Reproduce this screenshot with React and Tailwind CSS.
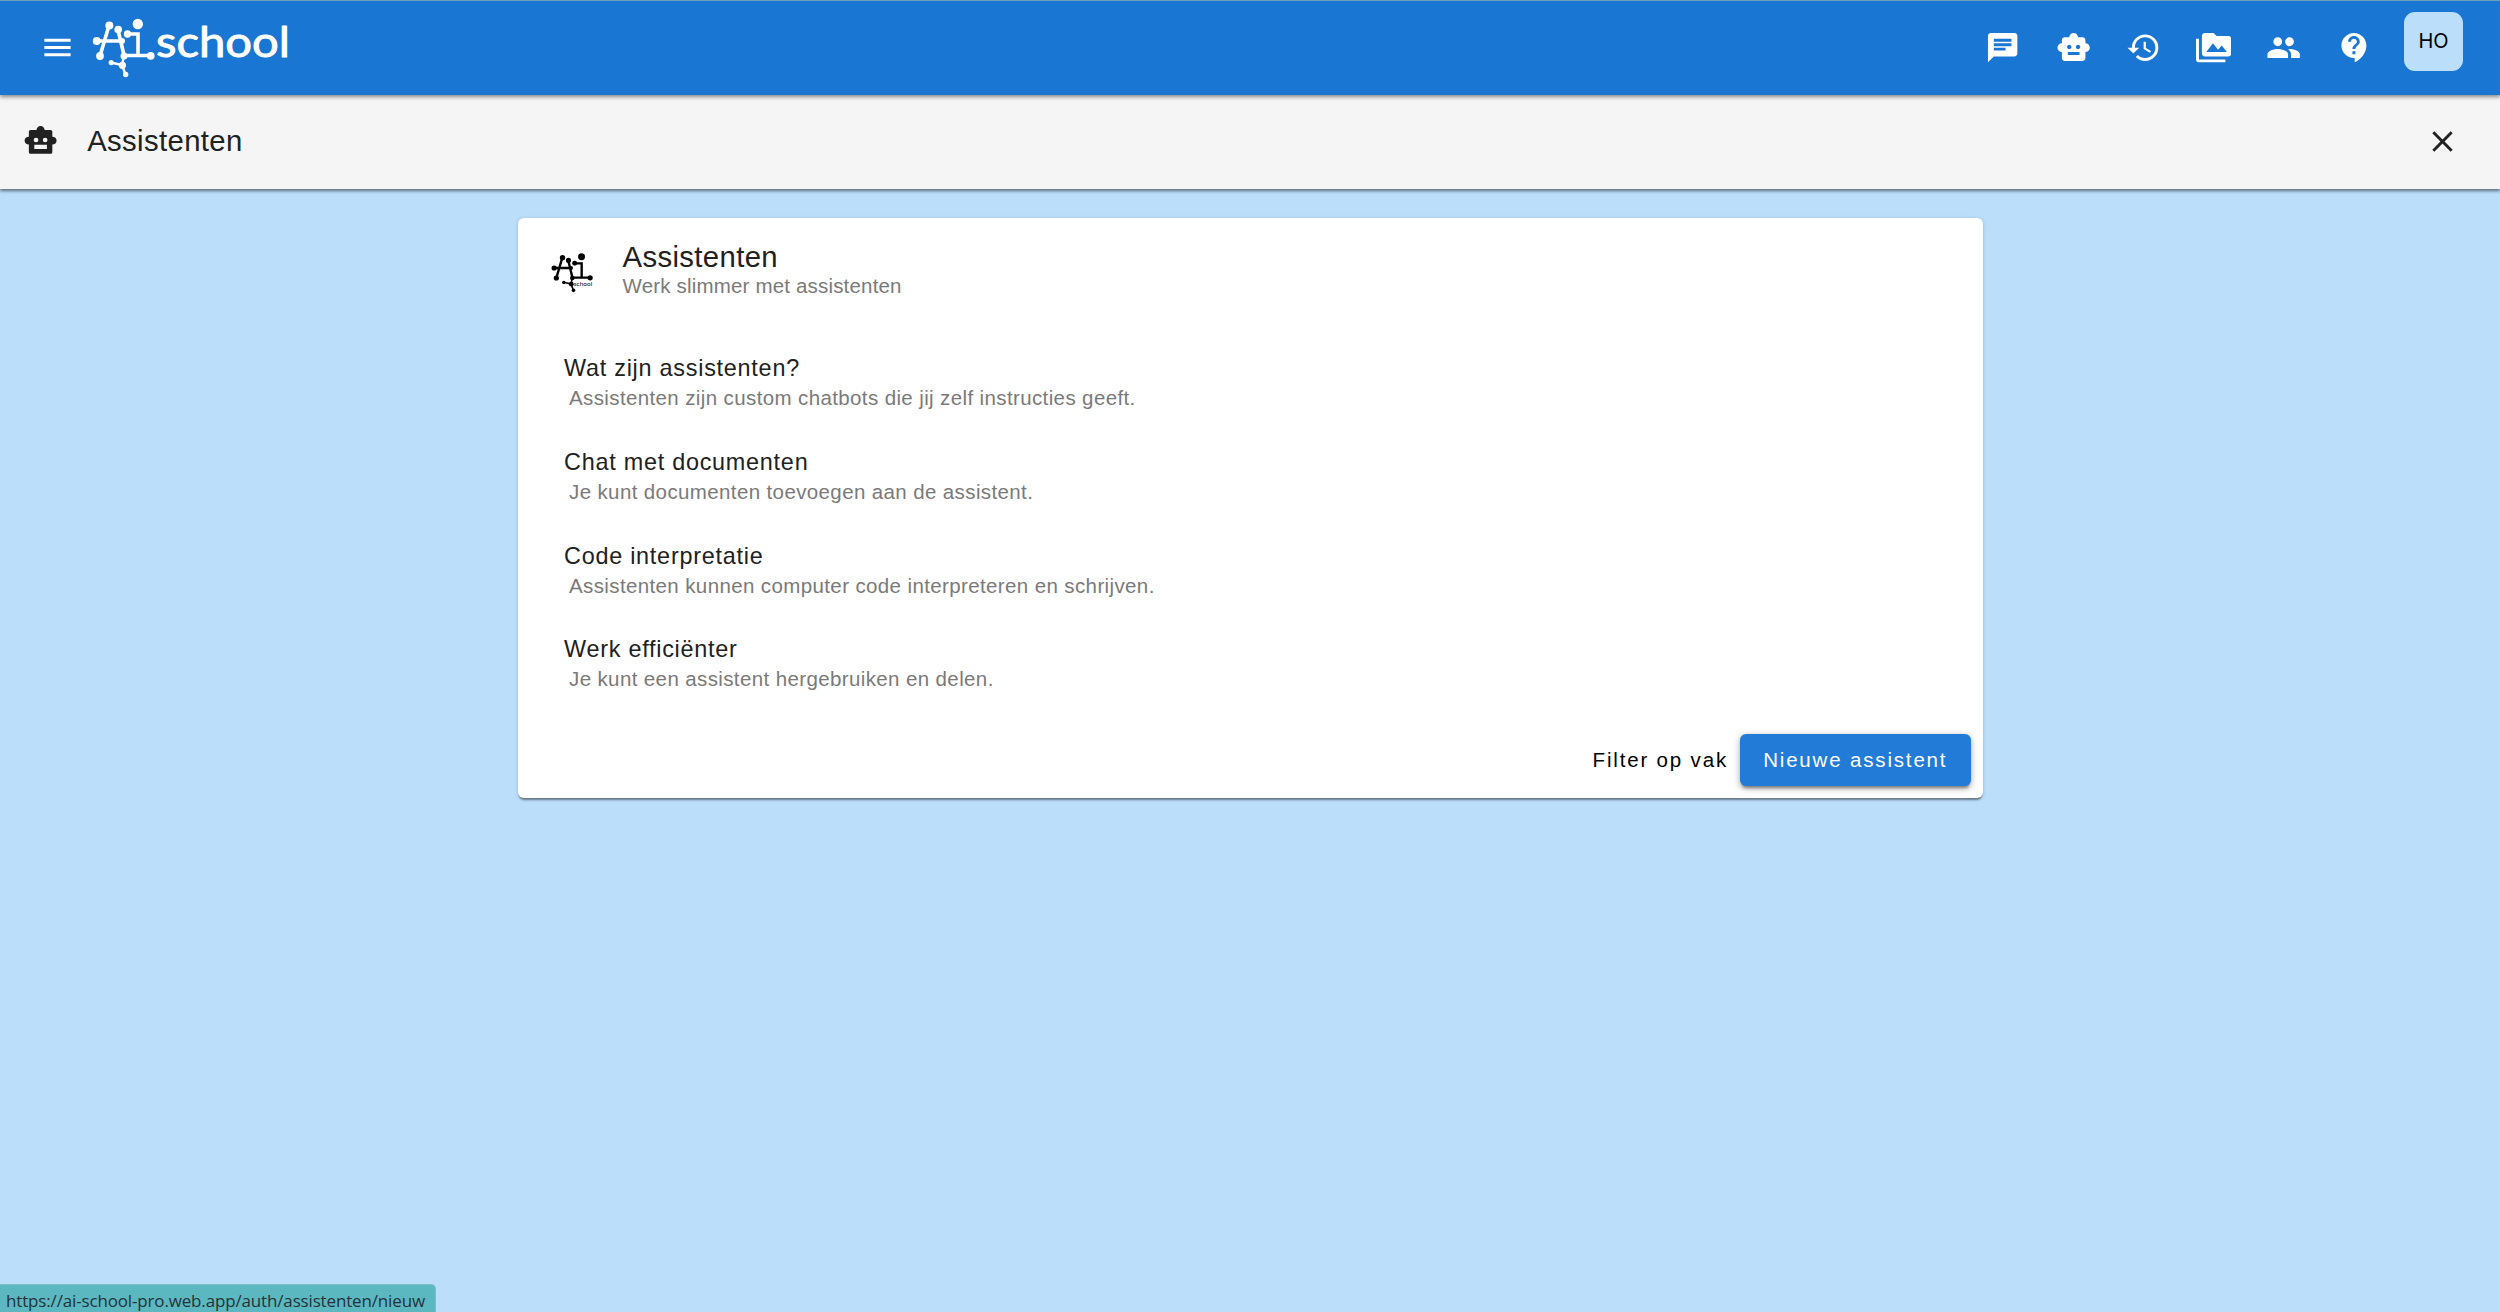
import { MdMenu, MdChat, MdSmartToy, MdHistory, MdPermMedia, MdPeople, MdContactSupport, MdClose } from "react-icons/md";

function AiMark({ className, children, viewBox }) {
  return (
    <svg className={className} viewBox={viewBox} fill="currentColor" stroke="currentColor">
      <g fill="none" strokeWidth="3.6" strokeLinecap="round">
        <path d="M109 25.5L100 56M97 41H121" />
        <path d="M118 30L124 55" />
        <path d="M127 34H138V55.5M124 55.5H151" />
        <path d="M124 55.5L122 65M111 62.5L122 65L125.500 74.500" strokeWidth="2.4" />
      </g>
      <g stroke="none">
        <circle cx="109.300" cy="25.500" r="4" />
        <circle cx="118.200" cy="29.600" r="3.800" />
        <circle cx="96.700" cy="41" r="3.900" />
        <circle cx="122" cy="41" r="3" />
        <circle cx="100" cy="56" r="3.900" />
        <circle cx="127.500" cy="34" r="3.700" />
        <circle cx="137.800" cy="24" r="5.200" />
        <circle cx="124" cy="56" r="3.500" />
        <circle cx="150.700" cy="55.800" r="3.900" />
        <circle cx="111.200" cy="62.600" r="2.600" />
        <circle cx="122.400" cy="65.300" r="3.600" />
        <circle cx="125.700" cy="74.500" r="2.700" />
      </g>
      {children}
    </svg>
  );
}

const actions = [MdChat, MdSmartToy, MdHistory, MdPermMedia, MdPeople, MdContactSupport];

const items = [
  ["Wat zijn assistenten?", "Assistenten zijn custom chatbots die jij zelf instructies geeft."],
  ["Chat met documenten", "Je kunt documenten toevoegen aan de assistent."],
  ["Code interpretatie", "Assistenten kunnen computer code interpreteren en schrijven."],
  ["Werk efficiënter", "Je kunt een assistent hergebruiken en delen."],
];

export default function App() {
  return (
    <div className="flex h-[1312px] w-[2500px] flex-col overflow-hidden bg-[#bbdefb] font-['Liberation_Sans',sans-serif] text-[#212121]">
      <header className="z-20 flex h-[95px] shrink-0 items-center border-t border-[#6f9fb8] bg-[#1976d2] pr-[37px] pb-px pl-[40px] text-white shadow-[0_2px_4px_rgba(0,0,0,0.45)]">
        <MdMenu className="size-[35px]" />
        <AiMark className="ml-[10px] h-[94px] w-[215px]" viewBox="85 1 215 94">
          <text x="156" y="56.500" fontSize="42" strokeWidth="0.900" strokeLinejoin="round" textLength="134" lengthAdjust="spacingAndGlyphs" fontFamily="Lato, sans-serif">school</text>
        </AiMark>
        <nav className="ml-auto flex gap-[35px]">
          {actions.map((Icon, i) => (
            <Icon key={i} className="size-[35.300px]" />
          ))}
        </nav>
        <div className="mb-[13px] ml-[32px] flex size-[59px] items-center justify-center rounded-[11px] bg-[#bbdefb] font-['Inter',sans-serif] text-[20px] text-black">HO</div>
      </header>
      <div className="z-10 flex h-[94px] shrink-0 items-center bg-[#f5f5f5] pr-[40px] pb-[2px] pl-[22.500px] shadow-[0_2px_3px_rgba(0,0,0,0.5)]">
        <svg className="size-[35.200px]" viewBox="0 0 24 24" fill="currentColor">
          <path fillRule="evenodd" d="M12 2C10.300 2 9.400 3.200 9.200 4.800H5.300C4.500 4.800 4 5.300 4 6.100V9.300C2.300 9.300 1.100 10.300 1.100 12S2.300 14.700 4 14.700V19.700C4 20.500 4.500 21 5.300 21H18.700C19.500 21 20 20.500 20 19.700V14.700C21.700 14.700 22.900 13.700 22.900 12S21.700 9.300 20 9.300V6.100C20 5.300 19.500 4.800 18.700 4.800H14.800C14.600 3.200 13.700 2 12 2ZM8.900 10A1.600 1.600 0 1 1 8.900 13.200 1.600 1.600 0 0 1 8.900 10ZM15.100 10A1.600 1.600 0 1 1 15.100 13.200 1.600 1.600 0 0 1 15.100 10ZM7.700 14.800H16.300V17.700H7.700Z" />
        </svg>
        <h1 className="ml-[29.500px] text-[29.300px] tracking-[0.366px]">Assistenten</h1>
        <MdClose className="ml-auto size-[35px]" />
      </div>
      <main className="mx-auto mt-[29px] flex h-[580px] w-[1465px] shrink-0 flex-col rounded-[6px] bg-white shadow-[0_3px_2px_-1px_rgba(0,0,0,0.4),0_1px_4px_rgba(0,0,0,0.15)]">
        <div className="flex h-[105px] items-center pl-[33px]">
          <AiMark className="mt-[4px] h-[42px] w-[42px] text-black" viewBox="92 17 63 63">
            <text x="126" y="68.500" fontSize="9.500" stroke="none" textLength="28" fontFamily="Lato, sans-serif">school</text>
          </AiMark>
          <div className="ml-[30px]">
            <h2 className="text-[29.300px] leading-[29px] tracking-[0.366px]">Assistenten</h2>
            <p className="text-[20.500px] leading-[29px] tracking-[0.180px] text-[#7a7a7a]">Werk slimmer met assistenten</p>
          </div>
        </div>
        <ul className="mt-[29px] pl-[46.500px]">
          {items.map(([title, text]) => (
            <li key={title} className="flex h-[93.800px] flex-col">
              <span className="text-[23.400px] leading-[32px] tracking-[0.750px]">{title}</span>
              <span className="pl-[5px] text-[20.500px] leading-[28px] tracking-[0.380px] text-[#7a7a7a]">{text}</span>
            </li>
          ))}
        </ul>
        <div className="mt-auto mb-[12px] flex items-center justify-end pr-[11.500px] text-[20.500px] tracking-[1.830px]">
          <span className="text-black">Filter op vak</span>
          <button className="ml-[11.500px] h-[52px] w-[231.500px] rounded-[6px] bg-[#227bd7] text-white shadow-[0_4px_3px_-2px_rgba(0,0,0,0.35),0_2px_7px_rgba(0,0,0,0.35)]">Nieuwe assistent</button>
        </div>
      </main>
      <footer className="mt-auto flex h-[28px] w-[436px] items-center rounded-tr-[5px] border-t border-r border-[#82bcc9] bg-[#5bb8c1] pt-[5px] pl-[6px] font-['Open_Sans',sans-serif] text-[17px] tracking-[-0.155px] text-[#263238]">https://ai-school-pro.web.app/auth/assistenten/nieuw</footer>
    </div>
  );
}
